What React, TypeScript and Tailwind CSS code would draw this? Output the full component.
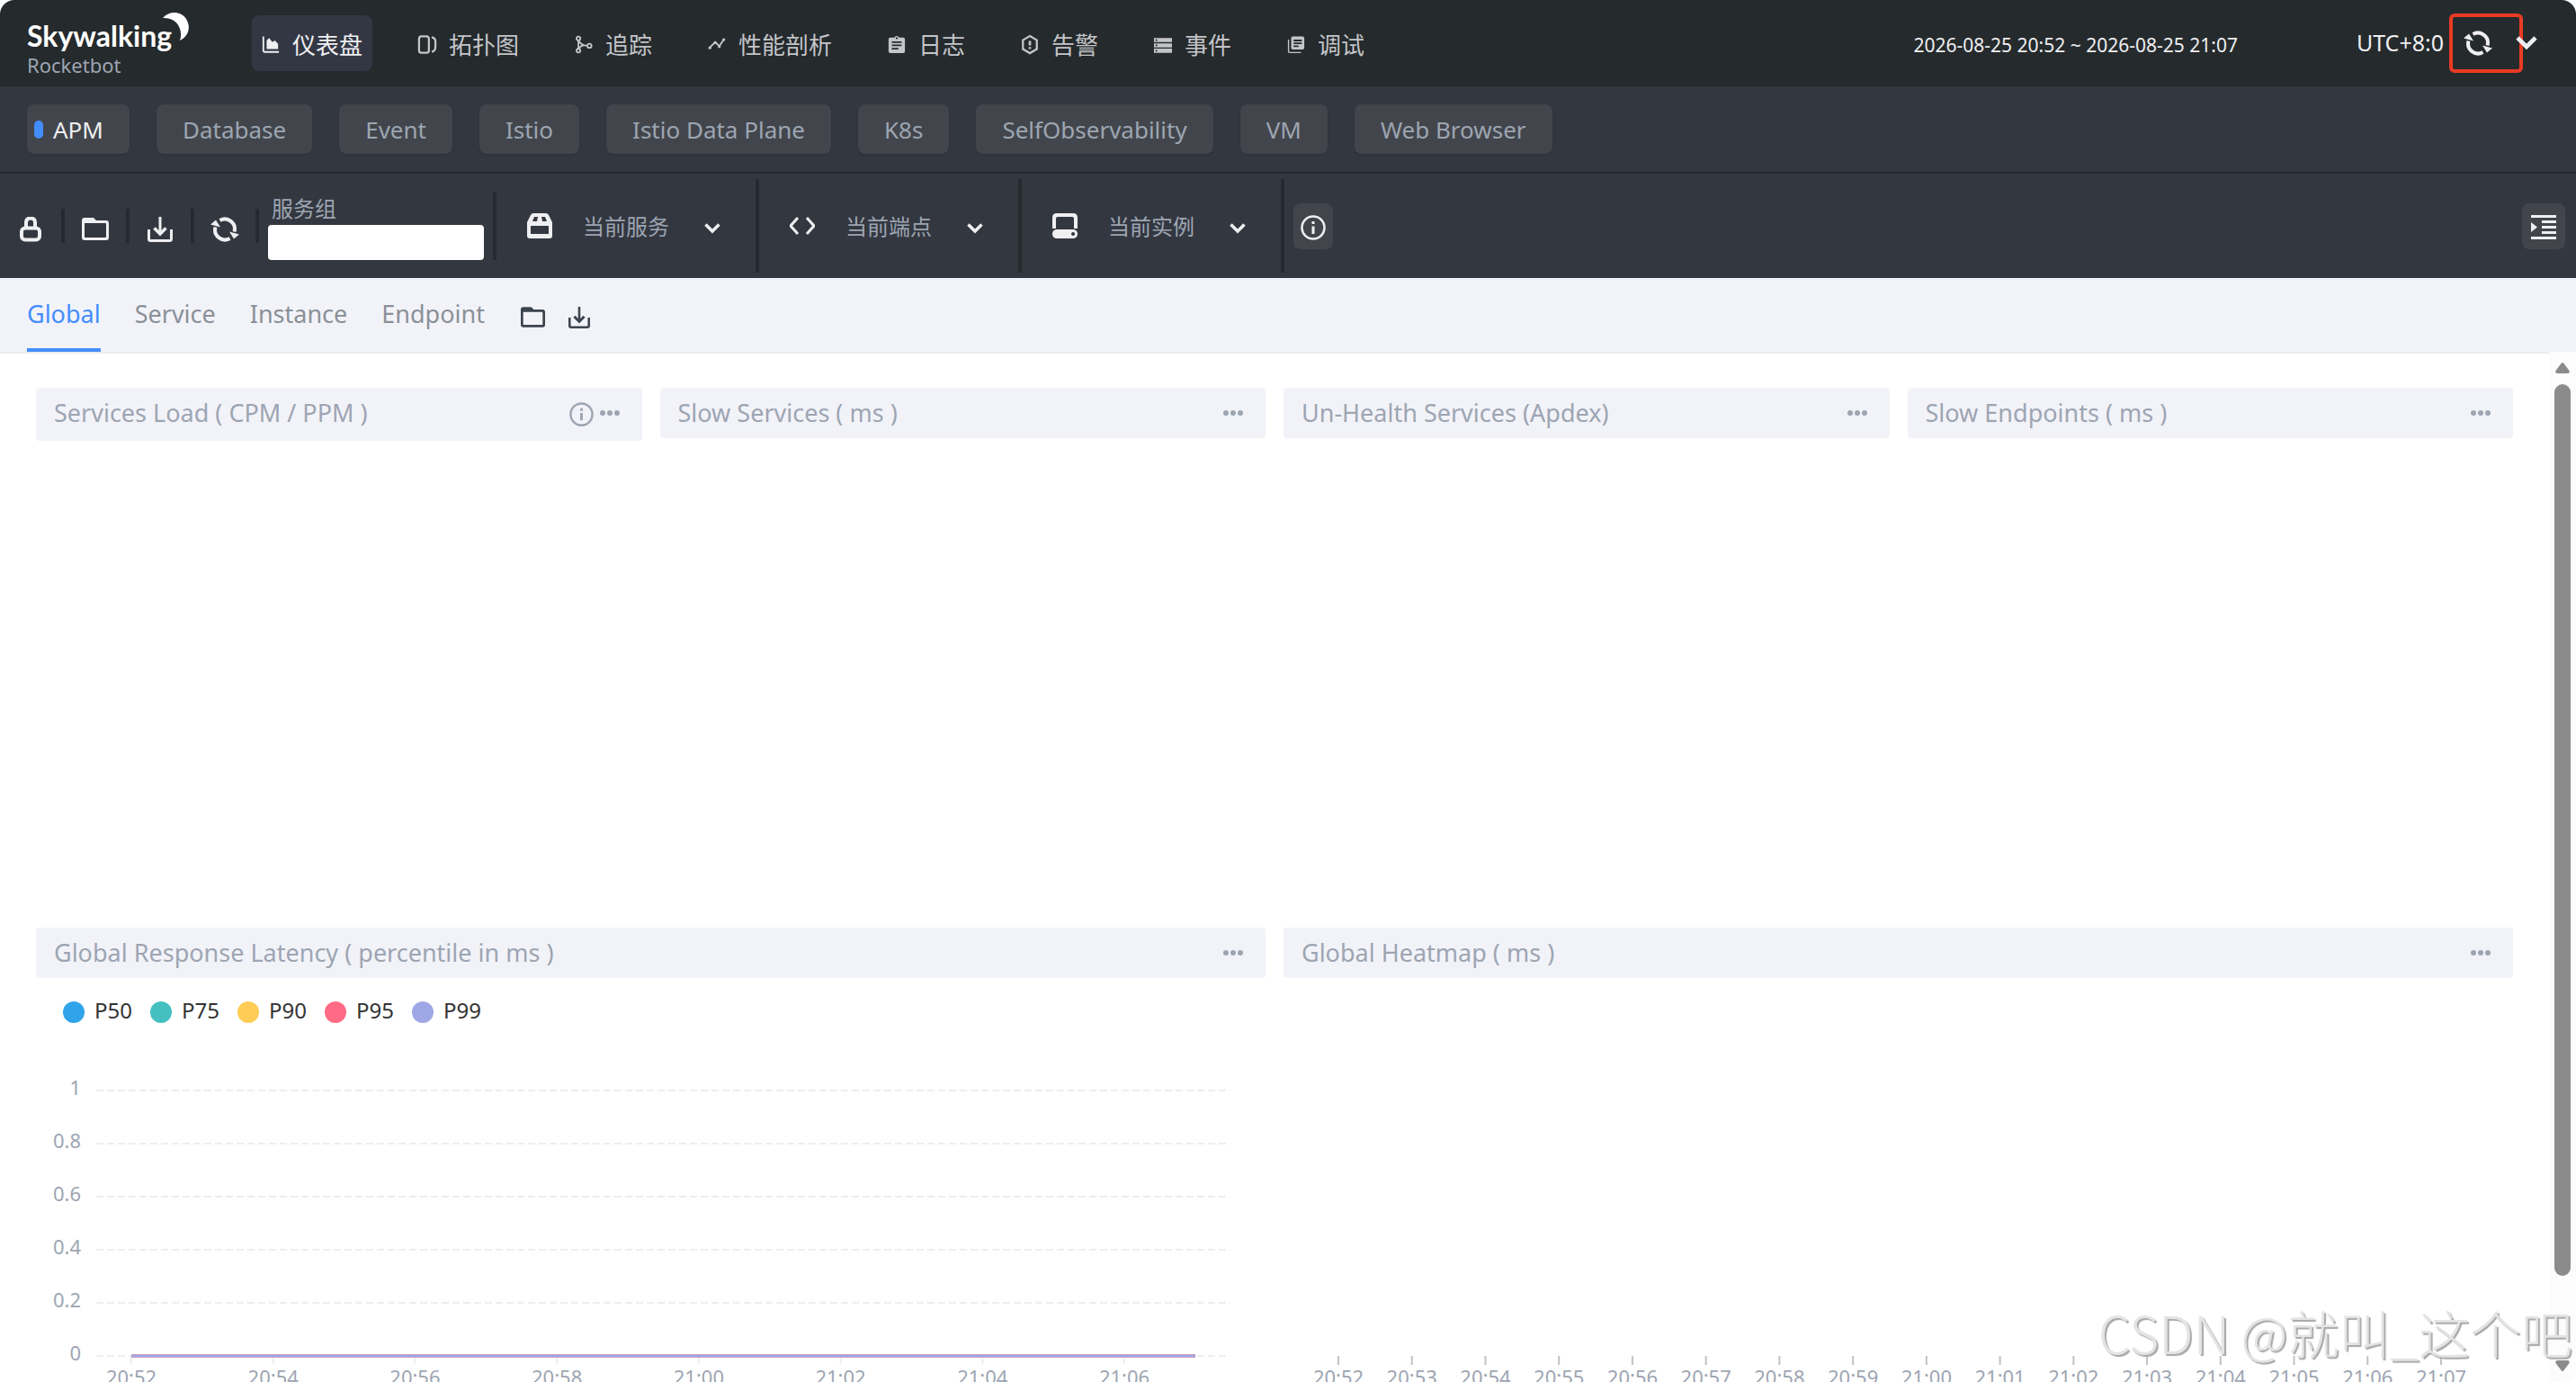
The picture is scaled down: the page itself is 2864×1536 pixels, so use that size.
import { useState } from "react";
import type { ReactNode } from "react";

const RefreshIcon = ({ className }: { className?: string }) => (
  <svg viewBox="0 0 32 28" className={className} fill="none" stroke="currentColor" strokeWidth="4">
    <path d="M10.5 4 A11 11 0 0 1 26.5 16.5" />
    <path d="M21.5 24 A11 11 0 0 1 5.5 11.5" />
    <path d="M21 16.5 L32 19.5 L26 24.5 Z" fill="currentColor" stroke="none" />
    <path d="M11 11.5 L0 8.5 L6 3.5 Z" fill="currentColor" stroke="none" />
  </svg>
);

const FolderIcon = ({ className }: { className?: string }) => (
  <svg viewBox="0 0 30 26" className={className}>
    <path
      fill="currentColor"
      fillRule="evenodd"
      d="M3 0h10l3 3h11a3 3 0 0 1 3 3v16a3 3 0 0 1-3 3H3a3 3 0 0 1-3-3V3a3 3 0 0 1 3-3zM3 6v15q0 1 1 1h22q1 0 1-1V7q0-1-1-1z"
    />
  </svg>
);

const DownloadIcon = ({ className }: { className?: string }) => (
  <svg viewBox="0 0 28 28" className={className} fill="none" stroke="currentColor" strokeWidth="3">
    <path d="M1.5 14v10.5q0 2 2 2h21q2 0 2-2V14" />
    <path d="M14 0v18" />
    <path d="M7.5 12.5l6.5 6.5 6.5-6.5" strokeWidth="3.5" />
  </svg>
);

const LockIcon = () => (
  <svg viewBox="0 0 24 28" className="h-7 w-6">
    <path d="M7 13V6.500q0-5 5-5t5 5V13" fill="none" stroke="currentColor" strokeWidth="4" />
    <rect x="2" y="12.500" width="20" height="13" rx="4" fill="none" stroke="currentColor" strokeWidth="4" />
  </svg>
);

const InfoIcon = ({ className }: { className?: string }) => (
  <svg viewBox="0 0 28 28" className={className} fill="none" stroke="currentColor" strokeWidth="2.500">
    <circle cx="14" cy="14" r="12.500" />
    <path d="M14 12.500V21M14 7v3" strokeWidth="3" />
  </svg>
);

const DotsIcon = () => (
  <svg viewBox="0 0 24 6" className="w-6 h-1.5" fill="currentColor">
    <circle cx="4" cy="3" r="3" />
    <circle cx="12" cy="3" r="3" />
    <circle cx="20" cy="3" r="3" />
  </svg>
);

const ChevronIcon = ({ className }: { className?: string }) => (
  <svg viewBox="0 0 18 12" className={className} fill="none" stroke="currentColor" strokeWidth="3.500">
    <path d="M1.500 1.500L9 9l7.500-7.500" />
  </svg>
);

const ListIcon = () => (
  <svg viewBox="0 0 28 28" className="w-7 h-7" fill="currentColor">
    <path d="M0 0h28v3H0zM12 6h16v3H12zM12 12h16v3H12zM12 18h16v3H12zM0 24h28v3H0zM0 8l7 5.500L0 19z" />
  </svg>
);

const navItems = [
  {
    name: "仪表盘",
    icon: <path d="M0 0h2v17q0 1 1 1h17v2H3q-3 0-3-3zM5 15.500V5l3-3 4 5 3-2 4 4v6.500z" />,
  },
  {
    name: "拓扑图",
    icon: (
      <g fill="none" stroke="currentColor" strokeWidth="2.500">
        <rect x="0" y="0" width="12" height="20" rx="3" />
        <path d="M15.500 1q4.500 1 4.500 5v7q0 5-4.500 6" />
      </g>
    ),
  },
  {
    name: "追踪",
    icon: (
      <g fill="none" stroke="currentColor" strokeWidth="2">
        <circle cx="3.500" cy="2.500" r="2.300" />
        <circle cx="3.500" cy="17.500" r="2.300" />
        <circle cx="17" cy="11.500" r="2.500" />
        <path d="M3.500 5v10M4 5.500q3 5.500 10 6M4 15q2-3.500 6-4" />
      </g>
    ),
  },
  {
    name: "性能剖析",
    icon: (
      <g>
        <path d="M1 14l7-7 5 5 6-9" fill="none" stroke="currentColor" strokeWidth="2" />
        <circle cx="1.500" cy="14" r="1.800" />
        <circle cx="8" cy="7.500" r="1.800" />
        <circle cx="13" cy="12.500" r="1.800" />
        <circle cx="18.500" cy="4" r="1.800" />
      </g>
    ),
  },
  {
    name: "日志",
    icon: (
      <path
        fillRule="evenodd"
        d="M2 1.500h5q1-2 3-2t3 2h5q2 0 2 2v15q0 2-2 2H2q-2 0-2-2v-15q0-2 2-2zM10 1a1.200 1.200 0 1 0 .1 0zM4 6v2h12V6zM4 10v2h12v-2zM4 14v2h8v-2z"
      />
    ),
  },
  {
    name: "告警",
    icon: (
      <g fill="none" stroke="currentColor" strokeWidth="2.500">
        <path d="M10-.5l8.500 5v11L10 20.500l-8.500-5v-11z" />
        <path d="M10 5.500V11M10 13v2.500" strokeWidth="3" />
      </g>
    ),
  },
  {
    name: "事件",
    icon: (
      <path
        fillRule="evenodd"
        d="M-1 2h22v5H-1zM-1 8.500h22v5H-1zM-1 15h22v5H-1zM1 3.500v2h2v-2zM1 10v2h2v-2zM1 16.500v2h2v-2z"
      />
    ),
  },
  {
    name: "调试",
    icon: (
      <path
        fillRule="evenodd"
        d="M6 0h12q2 0 2 2v12q0 2-2 2H6q-2 0-2-2V2q0-2 2-2zM7 4v2h10V4zM7 7.500v2h10v-2zM7 11v2h6v-2zM0 4h1.500v14.500q0 .5.5.5h14v1.500H2q-2 0-2-2z"
      />
    ),
  },
];

const groups = [
  "APM",
  "Database",
  "Event",
  "Istio",
  "Istio Data Plane",
  "K8s",
  "SelfObservability",
  "VM",
  "Web Browser",
];

const tabs = ["Global", "Service", "Instance", "Endpoint"];

const selectors = [
  {
    name: "当前服务",
    icon: (
      <path
        fillRule="evenodd"
        d="M7 0h14q2 0 3 2l4 8v15q0 3-3 3H3q-3 0-3-3V10l4-8q1-2 3-2zM8 4l-2 5h5l1-5zM16 4l1 5h5l-2-5zM4 14v9h20v-9z"
      />
    ),
  },
  {
    name: "当前端点",
    icon: (
      <path d="M9 5L1 14l8 9M19 5l8 9-8 9" fill="none" stroke="currentColor" strokeWidth="3" />
    ),
  },
  {
    name: "当前实例",
    icon: (
      <path
        fillRule="evenodd"
        d="M5 0h18q5 0 5 5v12h-4V6q0-2-2-2H6Q4 4 4 6v11H0V5q0-5 5-5zM4 18h20q4 1 4 5t-4 5H4q-4-1-4-5t4-5zM23 21a2 2 0 1 0 .1 0z"
      />
    ),
  },
];

const legend = [
  { name: "P50", dot: "bg-[#30a4eb]" },
  { name: "P75", dot: "bg-[#45bfc0]" },
  { name: "P90", dot: "bg-[#ffcc55]" },
  { name: "P95", dot: "bg-[#ff6a84]" },
  { name: "P99", dot: "bg-[#a0a7e6]" },
];

const latencyTimes = ["20:52", "20:54", "20:56", "20:58", "21:00", "21:02", "21:04", "21:06"];
const latencyValues = ["1", "0.8", "0.6", "0.4", "0.2", "0"];
const heatmapTimes = [
  "20:52", "20:53", "20:54", "20:55", "20:56", "20:57", "20:58", "20:59",
  "21:00", "21:01", "21:02", "21:03", "21:04", "21:05", "21:06", "21:07",
];

const Divider = ({ className }: { className: string }) => (
  <div className={`w-1 shrink-0 bg-[#252a2f] ${className}`} />
);

type PanelProps = {
  title: string;
  info?: boolean;
  className?: string;
  children?: ReactNode;
};

const Panel = ({ title, info, className, children }: PanelProps) => (
  <section className={className}>
    <header className="flex items-start rounded bg-[#f2f3f9] py-4 pl-5 pr-6 text-[#9da5b2]">
      <h2 className="flex-1 text-[27px] leading-6">{title}</h2>
      {info && <InfoIcon className="w-[27px] h-[27px] mr-1.5" />}
      <button type="button" aria-label="More" className="flex h-6 items-center">
        <DotsIcon />
      </button>
    </header>
    {children}
  </section>
);

const LatencyChart = () => (
  <>
    <ul className="flex h-[63px] items-center gap-5 pl-[30px] pt-2">
      {legend.map((item) => (
        <li key={item.name} className="flex items-end gap-[11px] text-[24px] leading-7 text-[#333333]">
          <span className={`w-6 h-6 rounded-full ${item.dot}`} />
          {item.name}
        </li>
      ))}
    </ul>
    <svg viewBox="0 0 1367 400" className="w-full text-[22px]" fill="#9da5b2">
      {latencyValues.map((value, i) => (
        <g key={value}>
          <line
            x1="67"
            x2="1328"
            y1={62 + i * 59}
            y2={62 + i * 59}
            stroke="#eeeeee"
            strokeWidth="2"
            strokeDasharray="8 4"
          />
          <text x="50" y={67 + i * 59} textAnchor="end">
            {value}
          </text>
        </g>
      ))}
      {latencyTimes.map((time, i) => {
        const x = 106 + (i * 1104) / 7;
        return (
          <g key={time}>
            <line x1={x} x2={x} y1="358" y2="366" stroke="#eeeeee" strokeWidth="2" />
            <text x={x} y="389" textAnchor="middle">
              {time}
            </text>
          </g>
        );
      })}
      <line x1="106" x2="1289" y1="357" y2="357" stroke="#c9a0c0" strokeWidth="4" />
      <line x1="106" x2="1289" y1="357" y2="357" stroke="#a0a7e6" strokeWidth="2" />
    </svg>
  </>
);

const HeatmapChart = () => (
  <svg viewBox="0 0 1367 463" className="w-full text-[22px]" fill="#9da5b2">
    {heatmapTimes.map((time, i) => {
      const x = 61 + (i * 1226) / 15;
      return (
        <g key={time}>
          <line x1={x} x2={x} y1="420" y2="430" stroke="#bfc3c9" strokeWidth="2" />
          <text x={x} y="452" textAnchor="middle">
            {time}
          </text>
        </g>
      );
    })}
  </svg>
);

const App = () => {
  const [group, setGroup] = useState("APM");
  const [tab, setTab] = useState("Global");
  const [serviceGroup, setServiceGroup] = useState("");

  return (
    <div className="relative flex h-screen flex-col overflow-hidden rounded-2xl bg-white font-['Noto_Sans','Noto_Sans_CJK_SC',sans-serif]">
      {/* Top bar */}
      <header className="flex h-24 shrink-0 items-center bg-[#252a2d] pl-[30px] pr-[43px]">
        <a href="#" className="relative w-[250px] pt-2 text-white">
          <span className="block pt-1 font-['Lato'] text-[32px] font-bold leading-[36px]">Skywalking</span>
          <span className="block text-[22px] leading-7 text-[#9da5b2]">Rocketbot</span>
          <svg viewBox="0 0 30 32" className="absolute left-[151px] top-1 w-[30px] h-8" fill="currentColor">
            <path d="M0 6C7-2 20-2 26 7c6 10 2 20-7 24 4-12-3-26-19-25z" />
          </svg>
        </a>
        <nav className="flex flex-1 gap-10">
          {navItems.map((item, i) => (
            <a
              key={item.name}
              href="#"
              className={`flex h-[62px] items-center gap-[14px] rounded-lg px-[11px] pt-1 text-[26px] leading-8 ${
                i === 0 ? "bg-[#333744] text-[#efeff1]" : "text-[#c4c5c8]"
              }`}
            >
              <svg viewBox="-1 -1 22 23" className="w-5 h-[22px] overflow-visible" fill="currentColor">
                {item.icon}
              </svg>
              {item.name}
            </a>
          ))}
        </nav>
        <div className="flex items-center text-[#efeff1]">
          <button type="button" className="mr-[132px] whitespace-nowrap pt-1 text-[21px] leading-6">
            2026-08-25 20:52 ~ 2026-08-25 21:07
          </button>
          <span className="mr-1.5 whitespace-nowrap text-[25px]">UTC+8:0</span>
          <button
            type="button"
            aria-label="Refresh"
            className="flex h-[66px] w-[82px] items-center rounded-md border-4 border-[#ea3b24] pl-3"
          >
            <RefreshIcon className="w-8 h-7" />
          </button>
          <button type="button" aria-label="Time zone" className="-ml-2">
            <ChevronIcon className="w-6 h-4" />
          </button>
        </div>
      </header>

      {/* Dashboard groups */}
      <div className="flex h-[97px] shrink-0 items-center gap-[30px] border-b-2 border-[#252a2f] bg-[#333740] px-[30px]">
        {groups.map((name) => (
          <button
            key={name}
            type="button"
            onClick={() => setGroup(name)}
            className={`relative h-[55px] rounded-lg bg-[#42464c] px-[29px] text-[26px] leading-8 shadow-sm ${
              group === name ? "text-[#efeff1]" : "text-[#9da5b2]"
            }`}
          >
            {group === name && (
              <span className="absolute left-2 top-[18px] h-5 w-2.5 rounded-full bg-[#448dfe]" />
            )}
            {name}
          </button>
        ))}
      </div>

      {/* Tool bar */}
      <div className="flex h-[116px] shrink-0 items-center bg-[#333740] pl-[22px] pr-3 text-[#efeff1]">
        <button type="button" aria-label="Lock" className="pt-2">
          <LockIcon />
        </button>
        <Divider className="ml-[22px] mr-[19px] h-[38px]" />
        <button type="button" aria-label="Open" className="pt-2">
          <FolderIcon className="w-[30px] h-[26px]" />
        </button>
        <Divider className="ml-[19px] mr-5 h-[38px]" />
        <button type="button" aria-label="Download" className="pt-2">
          <DownloadIcon className="w-7 h-7" />
        </button>
        <Divider className="ml-5 mr-[18px] h-[38px]" />
        <button type="button" aria-label="Reload" className="pt-2">
          <RefreshIcon className="w-8 h-7" />
        </button>
        <Divider className="ml-[18px] mr-2.5 h-[38px]" />
        <div className="flex flex-col">
          <label htmlFor="service-group" className="pl-1 text-2xl leading-9 text-[#9da5b2]">
            服务组
          </label>
          <input
            id="service-group"
            value={serviceGroup}
            onChange={(e) => setServiceGroup(e.target.value)}
            className="h-[39px] w-[240px] rounded bg-white px-2 text-xl text-gray-800 outline-none"
          />
        </div>
        <Divider className="ml-2.5 h-[75px]" />
        {selectors.map((item) => (
          <div key={item.name} className="flex items-center">
            <svg viewBox="0 0 28 28" className="mx-[34px] w-7 h-7" fill="currentColor">
              {item.icon}
            </svg>
            <select
              aria-label={item.name}
              className="w-[96px] appearance-none bg-transparent pt-0.5 text-2xl text-[#9da5b2] outline-none"
            >
              <option>{item.name}</option>
            </select>
            <ChevronIcon className="mx-[39px] mt-1.5 w-[18px] h-3" />
            <Divider className="h-[104px]" />
          </div>
        ))}
        <button
          type="button"
          aria-label="Info"
          className="ml-2.5 flex h-[51px] w-11 items-center justify-center rounded-lg bg-[#42464c] pt-1"
        >
          <InfoIcon className="w-7 h-7" />
        </button>
        <button
          type="button"
          aria-label="Toggle panel"
          className="ml-auto flex h-[51px] w-12 items-center justify-center rounded-lg bg-[#42464c] pt-1"
        >
          <ListIcon />
        </button>
      </div>

      {/* Tabs */}
      <div className="flex h-[82px] shrink-0 items-center bg-[#f2f3f9] pl-[30px] text-[#3d444f]">
        <div role="tablist" className="flex h-full gap-[38px]">
          {tabs.map((name) => (
            <button
              key={name}
              type="button"
              role="tab"
              aria-selected={tab === name}
              onClick={() => setTab(name)}
              className={`h-full border-b-4 pt-0.5 text-[27px] leading-8 ${
                tab === name ? "border-[#448dfe] text-[#448dfe]" : "border-transparent text-[#8b9097]"
              }`}
            >
              {name}
            </button>
          ))}
        </div>
        <button type="button" aria-label="Open tab" className="ml-10 pt-1.5">
          <FolderIcon className="w-[27px] h-6" />
        </button>
        <button type="button" aria-label="Download tab" className="ml-[26px] pt-1.5">
          <DownloadIcon className="w-6 h-6" />
        </button>
      </div>

      <div className="flex min-h-0 flex-1">
        <main className="flex-1 overflow-hidden border-t-2 border-[#ebebeb] px-10 pt-[38px]">
          <div className="grid grid-cols-4 gap-5">
            <Panel title="Services Load ( CPM / PPM )" info className="h-[580px]" />
            <Panel title="Slow Services ( ms )" />
            <Panel title="Un-Health Services (Apdex)" />
            <Panel title="Slow Endpoints ( ms )" />
            <Panel title="Global Response Latency ( percentile in ms )" className="col-span-2">
              <LatencyChart />
            </Panel>
            <Panel title="Global Heatmap ( ms )" className="col-span-2">
              <HeatmapChart />
            </Panel>
          </div>
        </main>

        {/* Scroll bar */}
        <div className="flex w-[30px] shrink-0 flex-col items-center bg-[#fcfcfc] pb-3 pt-3 text-[#8b8b8b]">
          <svg viewBox="0 0 16 12" className="w-4 h-3" fill="currentColor">
            <path d="M6.500 1q1.500-2 3 0l6 8q1 3-2 3h-11q-3 0-2-3z" />
          </svg>
          <div className="mb-[94px] mt-3 w-[18px] flex-1 rounded-full bg-[#8b8b8b]" />
          <svg viewBox="0 0 16 12" className="w-4 h-3" fill="currentColor">
            <path d="M6.500 11q1.500 2 3 0l6-8q1-3-2-3h-11q-3 0-2 3z" />
          </svg>
        </div>
      </div>

      <div className="pointer-events-none absolute bottom-4 right-1 whitespace-nowrap font-['Noto_Sans_CJK_SC',sans-serif] text-[57px] font-light leading-[80px] text-[#e4e4e4] [text-shadow:2px_2px_1px_#a8a8a8]">
        CSDN @就叫_这个吧
      </div>
    </div>
  );
};

export default App;
